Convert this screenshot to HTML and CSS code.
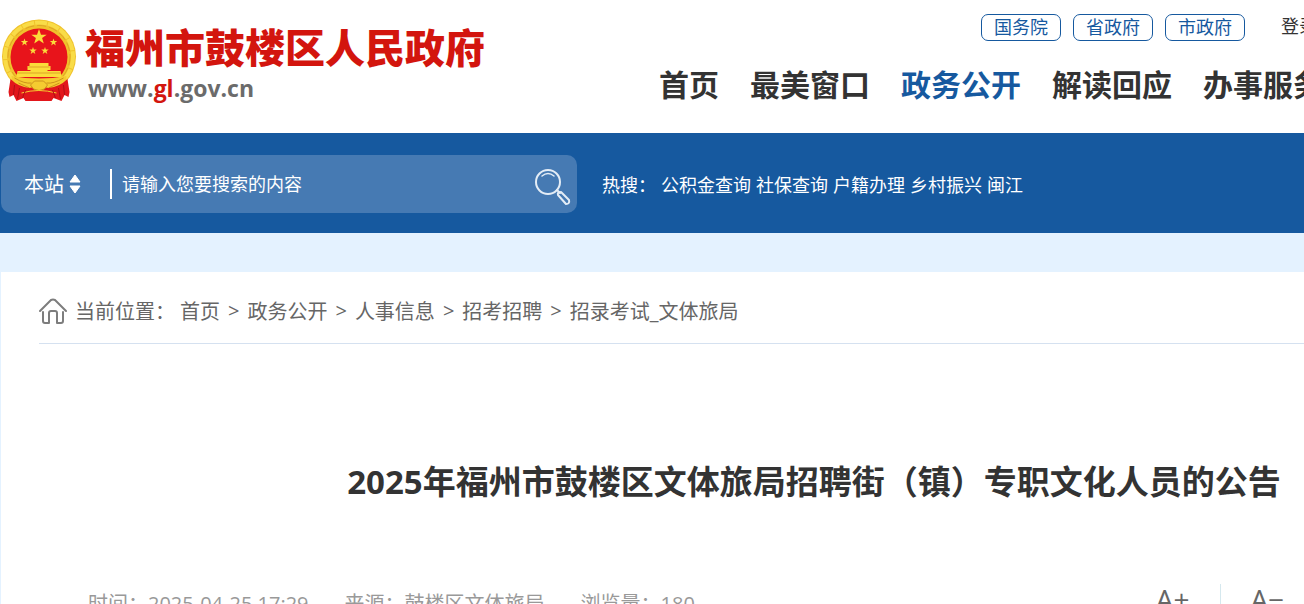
FILE: index.html
```html
<!DOCTYPE html>
<html lang="zh-CN">
<head>
  <meta charset="UTF-8" />
  <meta name="viewport" content="width=device-width, initial-scale=1.0">
  <title>福州市鼓楼区人民政府</title>
  <link rel="stylesheet" href="styles.css">
</head>
<body>
  <header class="header">
    <div class="wrap header-inner">
      <a class="logo" href="#">
        <svg class="emblem" viewBox="0 0 75 83" aria-hidden="true">
          <circle cx="37.5" cy="37.5" r="37" fill="#f0c22c" />
          <circle cx="37.5" cy="37.5" r="34" fill="none" stroke="#f9dc48" stroke-width="4" stroke-dasharray="12 1" />
          <circle cx="37.5" cy="37.5" r="31" fill="none" stroke="#dda526" stroke-width="1" stroke-dasharray="9 3" />
          <circle cx="37.5" cy="38" r="28.500" fill="#e8141b" />
          <g fill="#fbdc3a">
            <path d="M37.500 10l2 5.700h5.700l-4.600 3.400 1.700 5.500-4.800-3.300-4.800 3.300 1.700-5.500-4.600-3.400h5.700z" />
            <path d="M23 19.500l.9 2.500h2.800l-2.200 1.700.8 2.700-2.300-1.600-2.300 1.600.8-2.700-2.200-1.700h2.800z" />
            <path d="M52 19.500l.9 2.500h2.800l-2.200 1.700.8 2.700-2.300-1.600-2.300 1.600.8-2.700-2.200-1.700h2.800z" />
            <path d="M31.500 28l.9 2.500h2.800l-2.200 1.700.8 2.700-2.300-1.600-2.300 1.600.8-2.700-2.200-1.700h2.800z" />
            <path d="M43.500 28l.9 2.500h2.800l-2.200 1.700.8 2.700-2.300-1.600-2.300 1.600.8-2.700-2.200-1.700h2.800z" />
            <path d="M28 44h19v3h2v4h-3v4h-17v-4h-3v-4h2z" />
            <path d="M16 52h43l1 6H15z" />
          </g>
          <path d="M27 48h21M16 54h43" stroke="#dda526" stroke-width="1" />
          <path d="M10 57q27.500 5 55 0l-1 10-9 10H20L11 67z" fill="#f5cb30" />
          <path d="M13 59q10 6 17 5M62 59q-10 6-17 5M17 64l11 5M58 64l-11 5" fill="none" stroke="#cd921c" stroke-width="1" />
          <path d="M9 60q8 8 19 9 9-3 19 0 11-1 19-9l2 13-1 5-4-2-3 6-8-3-2 3H24l-2-3-7 3-3-6-4 2-1-5z" fill="#e2161b" />
          <path d="M29 66l4-4h9l4 4-3 4q-5.500 3-11 0z" fill="#f5cb30" stroke="#cd921c" stroke-width="1" />
          <path d="M20 74q17-5 35 0" fill="none" stroke="#f5cb30" stroke-width="1" />
          <path d="M13 66l-1 10M18 69l-2 11M24 71l-3 8M62 66l1 10M57 69l2 11M51 71l3 8" stroke="#ae1015" stroke-width="1" />
        </svg>
        <span class="logo-text">
          <strong class="logo-name">福州市鼓楼区人民政府</strong>
          <span class="logo-url">www.<em>gl</em>.gov.cn</span>
        </span>
      </a>

      <div class="header-right">
        <div class="top-links">
          <a class="pill" href="#">国务院</a>
          <a class="pill" href="#">省政府</a>
          <a class="pill" href="#">市政府</a>
          <a class="login" href="#">登录</a>
        </div>
        <nav class="nav">
          <a href="#">首页</a>
          <a href="#">最美窗口</a>
          <a class="active" href="#">政务公开</a>
          <a href="#">解读回应</a>
          <a href="#">办事服务</a>
        </nav>
      </div>
    </div>
  </header>

  <section class="search-bar">
    <div class="wrap search-inner">
      <form class="search-box">
        <div class="scope">
          <select aria-label="搜索范围">
            <option>本站</option>
          </select>
          <svg class="scope-arrow" viewBox="0 0 12 20" aria-hidden="true">
            <path d="M6 1L11 8H1zM6 19L1 12h10z" fill="#fff" stroke="#fff" stroke-linejoin="round" />
          </svg>
        </div>
        <input class="keyword" type="text" placeholder="请输入您要搜索的内容" aria-label="搜索内容">
        <button class="search-btn" type="button" aria-label="搜索">
          <svg viewBox="0 0 36 36" fill="none" stroke="#e4edf6" stroke-linecap="round">
            <circle cx="13" cy="13" r="12" stroke-width="2" />
            <path d="M7 7q6-5 12 0" stroke-width="1.500" />
            <path d="M22 21l3 3" stroke-width="2" />
            <path d="M23 26q-1-3 3-3l8 8q1 4-3 4z" stroke-width="2" stroke-linejoin="round" />
          </svg>
        </button>
      </form>
      <div class="hot">
        <span class="hot-label">热搜：</span>
        <a href="#">公积金查询</a>
        <a href="#">社保查询</a>
        <a href="#">户籍办理</a>
        <a href="#">乡村振兴</a>
        <a href="#">闽江</a>
      </div>
    </div>
  </section>

  <main class="wrap content">
    <div class="crumbs">
      <svg class="home" viewBox="0 0 28 26" fill="none" stroke="#7d7d7d" stroke-width="2" stroke-linecap="round" stroke-linejoin="round" aria-hidden="true">
        <path d="M1 13L12 2q2-1 4 0l11 11" />
        <path d="M4 14v9q0 2 2 2h4V15q0-2 2-2h4q2 0 2 2v10h4q2 0 2-2v-9" />
      </svg>
      <span class="crumbs-label">当前位置：</span>
      <a href="#">首页</a>
      <span>&gt;</span>
      <a href="#">政务公开</a>
      <span>&gt;</span>
      <a href="#">人事信息</a>
      <span>&gt;</span>
      <a href="#">招考招聘</a>
      <span>&gt;</span>
      <a href="#">招录考试_文体旅局</a>
    </div>

    <h1>2025年福州市鼓楼区文体旅局招聘街（镇）专职文化人员的公告</h1>

    <div class="meta">
      <span>时间：2025-04-25 17:29</span>
      <span>来源：鼓楼区文体旅局</span>
      <span>浏览量：180</span>
      <div class="font-size">
        <button type="button">A+</button>
        <button type="button">A−</button>
      </div>
    </div>
  </main>
</body>
</html>
```

FILE: styles.css
```css
* {
  margin: 0;
  padding: 0;
  box-sizing: border-box;
}

body {
  font-family: "Open Sans", "Noto Sans CJK SC", sans-serif;
  background: #e4f2ff;
  color: #333;
  overflow: hidden;
  white-space: nowrap;
}

a {
  color: inherit;
  text-decoration: none;
}

button,
input,
select {
  font: inherit;
  color: inherit;
  background: none;
  border: 0;
  outline: none;
}

/* 桌面版最小宽度 */
.wrap {
  min-width: 1626px;
  margin: 0 1px;
}

/* 页头 */
.header {
  background: #fff;
}

.header-inner {
  display: flex;
  height: 133px;
}

.logo {
  display: flex;
  align-items: flex-start;
  gap: 8px;
  width: 658px;
  padding-top: 19px;
}

.emblem {
  width: 76px;
  height: 83px;
}

.logo-text {
  display: flex;
  flex-direction: column;
  padding-top: 4px;
}

.logo-name {
  font-size: 40px;
  font-weight: 900;
  line-height: 50px;
  color: #d3150e;
}

.logo-url {
  padding-left: 3px;
  font-size: 23px;
  font-weight: 700;
  line-height: 30px;
  color: #6b6b6b;
}

.logo-url em {
  font-style: normal;
  color: #d3150e;
}

.header-right {
  padding-top: 14px;
}

.top-links {
  display: flex;
  gap: 12px;
  padding-left: 322px;
  font-size: 18px;
  line-height: 25px;
}

.pill {
  padding: 0 12px;
  border: 1px solid #16599f;
  border-radius: 7px;
  color: #16599f;
}

.login {
  margin-left: 24px;
}

.nav {
  display: flex;
  gap: 31px;
  margin-top: 22px;
  font-size: 30px;
  font-weight: 700;
  line-height: 44px;
}

.nav .active {
  color: #16599f;
}

/* 搜索栏 */
.search-bar {
  background: #16599f;
  color: #fff;
}

.search-inner {
  display: flex;
  align-items: center;
  gap: 25px;
  padding: 22px 0 20px;
}

.search-box {
  display: flex;
  align-items: center;
  width: 576px;
  height: 58px;
  padding: 0 6px 0 23px;
  background: #467ab3;
  border-radius: 10px;
}

.scope {
  display: flex;
  align-items: center;
  gap: 5px;
  width: 88px;
  height: 30px;
  border-right: 2px solid #fff;
  font-size: 20px;
}

.scope select {
  appearance: none;
}

.scope-arrow {
  width: 12px;
  height: 20px;
}

.keyword {
  flex: 1;
  padding-left: 10px;
  font-size: 18px;
}

.keyword::placeholder {
  color: #fff;
}

.search-btn {
  width: 36px;
  height: 36px;
  margin-top: 6px;
  cursor: pointer;
}

.search-btn svg {
  display: block;
}

.hot {
  display: flex;
  gap: 5px;
  font-size: 18px;
}

/* 正文 */
.content {
  margin-top: 39px;
  padding: 0 38px;
  background: #fff;
}

.crumbs {
  display: flex;
  align-items: center;
  gap: 8px;
  height: 72px;
  padding-top: 6px;
  border-bottom: 1px solid #d5e1f0;
  font-size: 20px;
  color: #666;
}

.home {
  width: 28px;
  height: 26px;
}

.crumbs-label {
  margin-right: -3px;
}

h1 {
  padding: 113px 0 77px;
  text-align: center;
  font-size: 33px;
  line-height: 50px;
}

.meta {
  display: flex;
  align-items: center;
  gap: 36px;
  padding: 0 49px;
  font-size: 20px;
  line-height: 40px;
  color: #999;
}

.font-size {
  display: flex;
  align-self: flex-start;
  margin-left: 395px;
  font-size: 28px;
  font-weight: 500;
  color: #666;
}

.font-size button {
  padding: 0 30px;
  line-height: 30px;
}

.font-size button + button {
  border-left: 1px solid #d5e8ee;
}
```
